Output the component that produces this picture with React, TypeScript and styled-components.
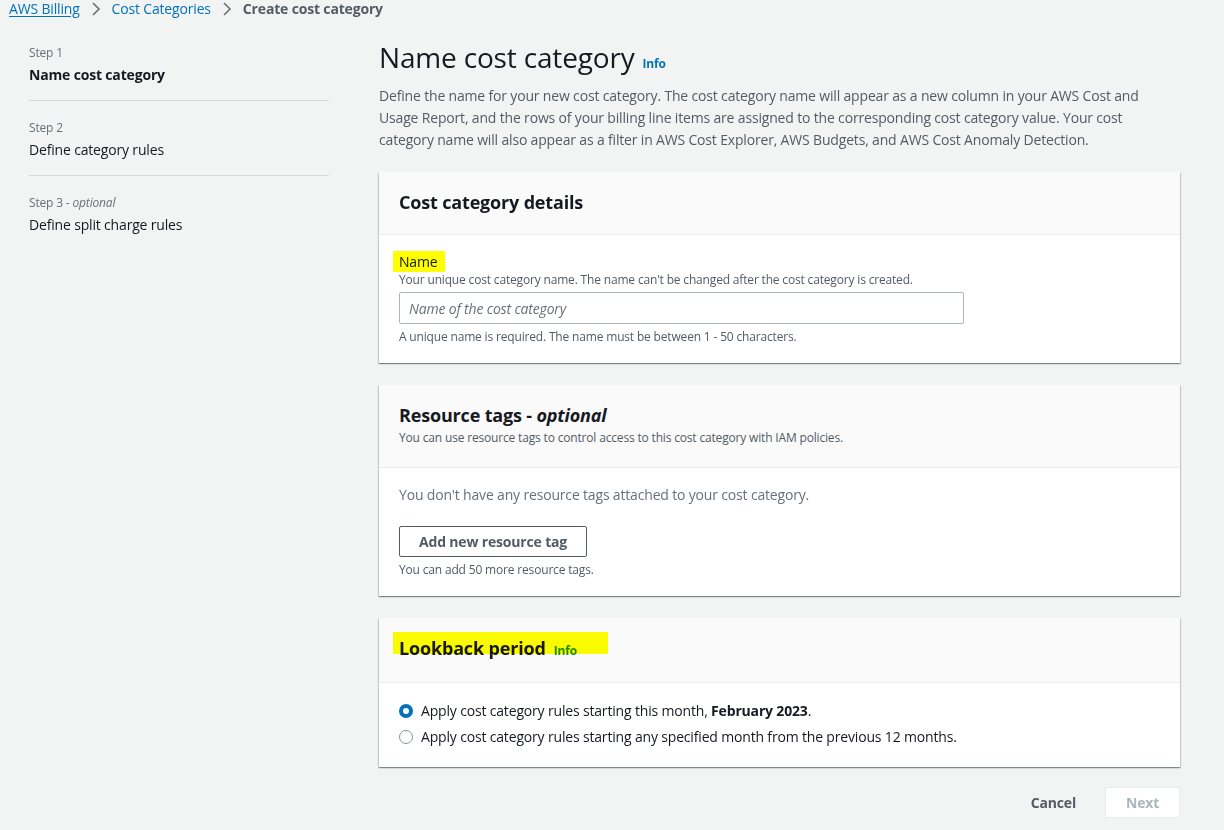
import React from 'react';
import styled, {createGlobalStyle} from 'styled-components';

const GRAY_BG = '#f2f3f3';
const TEXT_DARK = '#16191f';
const TEXT_BODY = '#545b64';
const TEXT_MUTED = '#687078';
const LINK = '#0073bb';
const BORDER = '#eaeded';

const GlobalStyle = createGlobalStyle`
  html, body {
    margin: 0;
    padding: 0;
    background: ${GRAY_BG};
    font-family: "Open Sans", "Noto Sans", sans-serif;
    letter-spacing: -0.17px;
    color: ${TEXT_DARK};
  }
  * { box-sizing: border-box; }
  button, input { letter-spacing: inherit; }
`;

const Page = styled.div`
  width: 1224px;
  min-height: 830px;
  background: ${GRAY_BG};
`;

const Breadcrumbs = styled.nav`
  display: flex;
  align-items: center;
  height: 18px;
  padding-left: 9px;
  font-size: 14px;
  line-height: 18px;
`;

const Crumb = styled.a<{$current?: boolean; $underline?: boolean}>`
  color: ${({$current}) => ($current ? TEXT_BODY : LINK)};
  font-weight: ${({$current}) => ($current ? 700 : 400)};
  text-decoration: ${({$underline}) => ($underline ? 'underline' : 'none')};
  text-underline-offset: 2px;
`;

const Chevron = styled.svg`
  width: 16px;
  height: 16px;
  margin: 0 8px;
`;

const Layout = styled.div`
  display: grid;
  grid-template-columns: 300px 801px;
  column-gap: 50px;
  padding: 15px 0 0 29px;
`;

const Steps = styled.ol`
  list-style: none;
  margin: 0;
  padding: 0;
`;

const StepItem = styled.li`
  padding: 19px 0 15px;
  border-bottom: 1px solid #d5dbdb;
  &:first-child { padding-top: 12px; }
  &:last-child { border-bottom: none; }
`;

const StepLabel = styled.div`
  font-size: 12px;
  line-height: 16px;
  color: ${TEXT_MUTED};
  em { font-style: italic; }
`;

const StepTitle = styled.div<{$active?: boolean}>`
  margin-top: 4px;
  font-size: 14px;
  line-height: 20px;
  font-weight: ${({$active}) => ($active ? 700 : 400)};
  color: ${TEXT_DARK};
`;

const Main = styled.main`
  display: flex;
  flex-direction: column;
  padding-top: 6px;
`;

const PageTitle = styled.h1`
  margin: 0;
  display: flex;
  align-items: baseline;
  gap: 8px;
  font-size: 28px;
  line-height: 36px;
  font-weight: 400;
  color: ${TEXT_DARK};
`;

const InfoLink = styled.span<{$tint?: string}>`
  font-size: 12px;
  line-height: 1;
  font-weight: 700;
  color: ${({$tint}) => $tint || LINK};
`;

const Description = styled.p`
  margin: 10px 0 21px;
  font-size: 14px;
  line-height: 22px;
  color: ${TEXT_BODY};
  width: 785px;
`;

const Cards = styled.div`
  display: flex;
  flex-direction: column;
  gap: 22px;
`;

const Card = styled.section`
  background: #fff;
  box-shadow: 0 1px 1px 0 rgba(0, 28, 36, 0.3), 1px 1px 1px 0 rgba(0, 28, 36, 0.15),
    -1px 1px 1px 0 rgba(0, 28, 36, 0.15);
`;

const CardHeader = styled.header<{$pb?: number}>`
  position: relative;
  background: #fafafa;
  border-bottom: 1px solid ${BORDER};
  padding: 18px 20px ${({$pb}) => $pb ?? 20}px;
`;

const CardTitle = styled.h2`
  position: relative;
  margin: 0;
  display: flex;
  align-items: baseline;
  gap: 8px;
  font-size: 18px;
  line-height: 24px;
  font-weight: 700;
  color: ${TEXT_DARK};
  em { font-weight: 700; font-style: italic; }
`;

const CardSubtitle = styled.div`
  margin-top: 2px;
  font-size: 12px;
  line-height: 18px;
  color: ${TEXT_BODY};
`;

const CardBody = styled.div<{$pb?: number; $pt?: number}>`
  padding: ${({$pt}) => $pt ?? 16}px 20px ${({$pb}) => $pb ?? 20}px;
`;

const Highlight = styled.span<{$w: number; $h: number; $l: number; $t: number}>`
  position: absolute;
  left: ${({$l}) => $l}px;
  top: ${({$t}) => $t}px;
  width: ${({$w}) => $w}px;
  height: ${({$h}) => $h}px;
  background: #ffff00;
  mix-blend-mode: multiply;
  pointer-events: none;
`;

const FieldLabel = styled.label`
  position: relative;
  display: block;
  font-size: 14px;
  line-height: 21px;
  color: ${TEXT_DARK};
`;

const Hint = styled.div<{$mt?: number}>`
  margin-top: ${({$mt}) => $mt || 0}px;
  font-size: 12px;
  line-height: 16px;
  color: ${TEXT_BODY};
`;

const TextInput = styled.input`
  display: block;
  margin-top: 4px;
  width: 565px;
  height: 32px;
  padding: 0 9px;
  border: 1px solid #aab7b8;
  border-radius: 2px;
  font-family: inherit;
  font-size: 14px;
  color: ${TEXT_DARK};
  &::placeholder {
    font-style: italic;
    color: #687078;
  }
`;

const EmptyText = styled.div`
  font-size: 14px;
  line-height: 20px;
  color: ${TEXT_MUTED};
  padding-top: 1px;
`;

const OutlineButton = styled.button`
  display: block;
  margin-top: 21px;
  height: 31px;
  padding: 0 19px;
  background: #fff;
  border: 1px solid ${TEXT_BODY};
  border-radius: 2px;
  font-family: inherit;
  font-size: 14px;
  font-weight: 700;
  color: ${TEXT_BODY};
`;

const RadioList = styled.div`
  display: flex;
  flex-direction: column;
  gap: 6px;
  padding-top: 1px;
`;

const RadioRow = styled.label`
  display: flex;
  align-items: center;
  gap: 8px;
  font-size: 14px;
  line-height: 20px;
  color: ${TEXT_DARK};
  b { font-weight: 700; }
`;

const RadioDot = styled.span<{$checked?: boolean}>`
  width: 14px;
  height: 14px;
  border-radius: 50%;
  flex: none;
  background: #fff;
  border: ${({$checked}) => ($checked ? `4px solid ${LINK}` : '1px solid #879596')};
`;

const Footer = styled.div`
  display: flex;
  justify-content: flex-end;
  align-items: center;
  gap: 29px;
  margin-top: 20px;
`;

const TextButton = styled.button`
  background: none;
  border: none;
  padding: 0;
  font-family: inherit;
  font-size: 14px;
  font-weight: 700;
  color: ${TEXT_BODY};
`;

const DisabledButton = styled.button`
  width: 75px;
  height: 31px;
  background: #fff;
  border: 1px solid #eaeded;
  border-radius: 2px;
  font-family: inherit;
  font-size: 14px;
  font-weight: 700;
  color: #aab7b8;
`;

const ChevronIcon = () => (
  <Chevron viewBox="0 0 16 16" fill="none">
    <polyline points="5,2 11,8 5,14" stroke="#687078" strokeWidth="1.6" />
  </Chevron>
);

const steps = [
  {label: 'Step 1', title: 'Name cost category', active: true},
  {label: 'Step 2', title: 'Define category rules'},
  {label: 'Step 3', optional: true, title: 'Define split charge rules'},
];

export default function App() {
  return (
    <Page>
      <GlobalStyle />
      <Breadcrumbs>
        <Crumb $underline>AWS Billing</Crumb>
        <ChevronIcon />
        <Crumb>Cost Categories</Crumb>
        <ChevronIcon />
        <Crumb $current>Create cost category</Crumb>
      </Breadcrumbs>
      <Layout>
        <Steps>
          {steps.map((s) => (
            <StepItem key={s.label}>
              <StepLabel>
                {s.label}
                {s.optional && (
                  <>
                    {' - '}
                    <em>optional</em>
                  </>
                )}
              </StepLabel>
              <StepTitle $active={s.active}>{s.title}</StepTitle>
            </StepItem>
          ))}
        </Steps>
        <Main>
          <PageTitle>
            Name cost category <InfoLink>Info</InfoLink>
          </PageTitle>
          <Description>
            Define the name for your new cost category. The cost category name will appear as a new
            column in your AWS Cost and Usage Report, and the rows of your billing line items are
            assigned to the corresponding cost category value. Your cost category name will also
            appear as a filter in AWS Cost Explorer, AWS Budgets, and AWS Cost Anomaly Detection.
          </Description>
          <Cards>
            <Card>
              <CardHeader>
                <CardTitle>Cost category details</CardTitle>
              </CardHeader>
              <CardBody $pb={18}>
                <FieldLabel>
                  Name
                  <Highlight $l={-6} $t={0} $w={52} $h={21} />
                </FieldLabel>
                <Hint>
                  Your unique cost category name. The name can't be changed after the cost category
                  is created.
                </Hint>
                <TextInput placeholder="Name of the cost category" />
                <Hint $mt={5}>
                  A unique name is required. The name must be between 1 - 50 characters.
                </Hint>
              </CardBody>
            </Card>
            <Card>
              <CardHeader>
                <CardTitle>
                  <span>
                    Resource tags - <em>optional</em>
                  </span>
                </CardTitle>
                <CardSubtitle>
                  You can use resource tags to control access to this cost category with IAM
                  policies.
                </CardSubtitle>
              </CardHeader>
              <CardBody $pb={18}>
                <EmptyText>You don't have any resource tags attached to your cost category.</EmptyText>
                <OutlineButton>Add new resource tag</OutlineButton>
                <Hint $mt={5}>You can add 50 more resource tags.</Hint>
              </CardBody>
            </Card>
            <Card>
              <CardHeader $pb={22}>
                <CardTitle>
                  Lookback period <InfoLink $tint="#1a8c3a">Info</InfoLink>
                  <Highlight $l={-6} $t={-4} $w={215} $h={22} />
                </CardTitle>
              </CardHeader>
              <CardBody $pt={17}>
                <RadioList>
                  <RadioRow>
                    <RadioDot $checked />
                    <span>
                      Apply cost category rules starting this month, <b>February 2023</b>.
                    </span>
                  </RadioRow>
                  <RadioRow>
                    <RadioDot />
                    <span>
                      Apply cost category rules starting any specified month from the previous 12
                      months.
                    </span>
                  </RadioRow>
                </RadioList>
              </CardBody>
            </Card>
          </Cards>
          <Footer>
            <TextButton>Cancel</TextButton>
            <DisabledButton>Next</DisabledButton>
          </Footer>
        </Main>
      </Layout>
    </Page>
  );
}
